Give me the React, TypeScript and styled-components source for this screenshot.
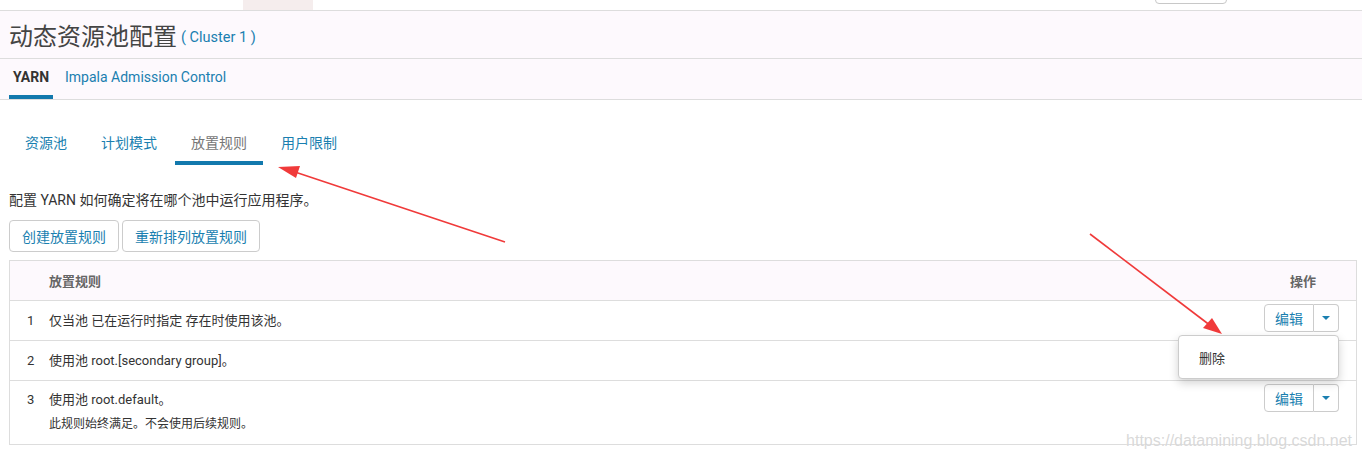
import React from "react";
import styled, { createGlobalStyle } from "styled-components";

const GlobalStyle = createGlobalStyle`
  html, body {
    margin: 0;
    padding: 0;
    background: #ffffff;
    font-family: Roboto, "Noto Sans CJK SC", sans-serif;
    color: #333333;
  }
`;

const Page = styled.div`
  position: relative;
  width: 1362px;
  height: 459px;
  overflow: hidden;
  background: #fff;
`;

const TopStrip = styled.div`
  height: 10px;
  border-bottom: 1px solid #ddd;
  position: relative;
  display: flex;
`;

const TopTab = styled.div`
  margin-left: 243px;
  width: 70px;
  height: 10px;
  background: #f5eded;
`;

const TopButton = styled.div`
  margin-left: 842px;
  margin-top: -10px;
  width: 70px;
  height: 12px;
  border: 1px solid #c8c8c8;
  border-radius: 0 0 4px 4px;
  background: #fff;
`;

const Header = styled.div`
  background: #fdf9fd;
  height: 47px;
  border-bottom: 1px solid #ddd;
  display: flex;
  align-items: center;
  padding-left: 9px;
`;

const Title = styled.h1`
  margin: 0;
  font-size: 24px;
  font-weight: 400;
  color: #444;
`;

const Cluster = styled.span`
  font-size: 14.5px;
  color: #1a7fb0;
  margin-left: 4px;
  margin-top: 6px;
`;

const MainTabs = styled.div`
  background: #fdf9fd;
  height: 40px;
  border-bottom: 1px solid #ddd;
  display: flex;
  padding-left: 9px;
  gap: 12px;
`;

const MainTab = styled.div<{ $active?: boolean }>`
  font-size: 14px;
  height: 40px;
  box-sizing: border-box;
  padding: 0 ${(p) => (p.$active ? "4px" : "0")};
  display: flex;
  align-items: center;
  color: ${(p) => (p.$active ? "#333" : "#1a7fb0")};
  font-weight: ${(p) => (p.$active ? 700 : 400)};
  border-bottom: 4px solid ${(p) => (p.$active ? "#1279ad" : "transparent")};
  padding-top: 0;
`;

const Content = styled.div`
  padding: 0 5px 0 9px;
`;

const SubTabs = styled.div`
  display: flex;
  margin-top: 24px;
`;

const SubTab = styled.div<{ $active?: boolean }>`
  font-size: 14px;
  height: 41px;
  box-sizing: border-box;
  padding: 0 16px 2px;
  display: flex;
  align-items: center;
  color: ${(p) => (p.$active ? "#777" : "#1a7fb0")};
  border-bottom: 4px solid ${(p) => (p.$active ? "#1279ad" : "transparent")};
  margin-right: 2px;
`;

const Description = styled.p`
  margin: 26px 0 0;
  font-size: 14px;
  color: #333;
  line-height: 18px;
`;

const ButtonRow = styled.div`
  display: flex;
  gap: 3px;
  margin-top: 11px;
`;

const Button = styled.button`
  height: 32px;
  box-sizing: border-box;
  padding: 0 12px;
  border: 1px solid #ccc;
  border-radius: 4px;
  background: #fff;
  color: #1a7fb0;
  font-family: inherit;
  font-size: 14px;
`;

const Table = styled.div`
  margin-top: 8px;
  border: 1px solid #ddd;
`;

const HeadRow = styled.div`
  display: flex;
  align-items: center;
  height: 39px;
  background: #fdf9fd;
  border-bottom: 1px solid #ddd;
  font-size: 13px;
  font-weight: 700;
  color: #666;
  padding-left: 39px;
  padding-right: 40px;
`;

const HeadCell = styled.div<{ $right?: boolean }>`
  flex: ${(p) => (p.$right ? "0 0 auto" : "1")};
`;

const Row = styled.div<{ $last?: boolean }>`
  display: flex;
  align-items: flex-start;
  min-height: 39px;
  border-bottom: ${(p) => (p.$last ? "none" : "1px solid #ddd")};
  font-size: 13px;
  color: #333;
  padding-right: 17px;
`;

const Index = styled.div<{ $lh?: number }>`
  width: 39px;
  box-sizing: border-box;
  padding-left: 17px;
  line-height: ${(p) => p.$lh ?? 39}px;
`;

const Rule = styled.div`
  flex: 1;
`;

const RuleText = styled.div<{ $lh?: number }>`
  line-height: ${(p) => p.$lh ?? 39}px;
`;

const Note = styled.div`
  font-size: 12px;
  line-height: 12px;
  margin-bottom: 14px;
`;

const Actions = styled.div`
  position: relative;
  display: flex;
  margin-top: 3px;
`;

const SplitMain = styled.button`
  height: 28px;
  box-sizing: border-box;
  padding: 0 10px;
  border: 1px solid #ccc;
  border-radius: 4px 0 0 4px;
  background: #fff;
  color: #1a7fb0;
  font-family: inherit;
  font-size: 14px;
`;

const SplitCaret = styled.button`
  width: 25px;
  height: 28px;
  box-sizing: border-box;
  border: 1px solid #ccc;
  border-left: none;
  border-radius: 0 4px 4px 0;
  background: #fff;
  display: flex;
  align-items: center;
  justify-content: center;
  padding: 0;
  &::after {
    content: "";
    border-left: 4px solid transparent;
    border-right: 4px solid transparent;
    border-top: 4px solid #1a7fb0;
  }
`;

const Menu = styled.div`
  position: absolute;
  top: 31px;
  right: 0;
  width: 161px;
  height: 44px;
  box-sizing: border-box;
  background: #fff;
  border: 1px solid #ccc;
  border-radius: 4px;
  box-shadow: 0 4px 10px rgba(0, 0, 0, 0.18);
  display: flex;
  align-items: center;
  padding-left: 20px;
  font-size: 13px;
  color: #333;
  z-index: 2;
`;

const Annotations = styled.svg`
  position: absolute;
  left: 0;
  top: 0;
  pointer-events: none;
  z-index: 3;
`;

const Watermark = styled.div`
  position: absolute;
  right: 10px;
  bottom: 9px;
  font-family: "Liberation Sans", Arial, sans-serif;
  font-size: 16px;
  color: rgba(200, 200, 200, 0.7);
  text-shadow: 0 0 1px rgba(255, 255, 255, 0.9);
  z-index: 4;
`;

function EditButton({ open }: { open?: boolean }) {
  return (
    <Actions>
      <SplitMain>编辑</SplitMain>
      <SplitCaret />
      {open && <Menu>删除</Menu>}
    </Actions>
  );
}

export default function App() {
  return (
    <Page>
      <GlobalStyle />
      <TopStrip>
        <TopTab />
        <TopButton />
      </TopStrip>
      <Header>
        <Title>动态资源池配置</Title>
        <Cluster>( Cluster 1 )</Cluster>
      </Header>
      <MainTabs>
        <MainTab $active>YARN</MainTab>
        <MainTab>Impala Admission Control</MainTab>
      </MainTabs>
      <Content>
        <SubTabs>
          <SubTab>资源池</SubTab>
          <SubTab>计划模式</SubTab>
          <SubTab $active>放置规则</SubTab>
          <SubTab>用户限制</SubTab>
        </SubTabs>
        <Description>配置 YARN 如何确定将在哪个池中运行应用程序。</Description>
        <ButtonRow>
          <Button>创建放置规则</Button>
          <Button>重新排列放置规则</Button>
        </ButtonRow>
        <Table>
          <HeadRow>
            <HeadCell>放置规则</HeadCell>
            <HeadCell $right>操作</HeadCell>
          </HeadRow>
          <Row>
            <Index>1</Index>
            <Rule>
              <RuleText>仅当池 已在运行时指定 存在时使用该池。</RuleText>
            </Rule>
            <EditButton open />
          </Row>
          <Row>
            <Index>2</Index>
            <Rule>
              <RuleText>使用池 root.[secondary group]。</RuleText>
            </Rule>
          </Row>
          <Row $last>
            <Index $lh={37}>3</Index>
            <Rule>
              <RuleText $lh={37}>使用池 root.default。</RuleText>
              <Note>此规则始终满足。不会使用后续规则。</Note>
            </Rule>
            <EditButton />
          </Row>
        </Table>
      </Content>
      <Annotations width="1362" height="459">
        <line x1="505" y1="242" x2="292" y2="171" stroke="#f03a3a" strokeWidth="1.6" />
        <polygon points="278,167 300,166 296,178" fill="#f03a3a" />
        <line x1="1090" y1="234" x2="1211" y2="326" stroke="#f03a3a" strokeWidth="1.6" />
        <polygon points="1222,334 1203,328 1212,318" fill="#f03a3a" />
      </Annotations>
      <Watermark>https://datamining.blog.csdn.net</Watermark>
    </Page>
  );
}
